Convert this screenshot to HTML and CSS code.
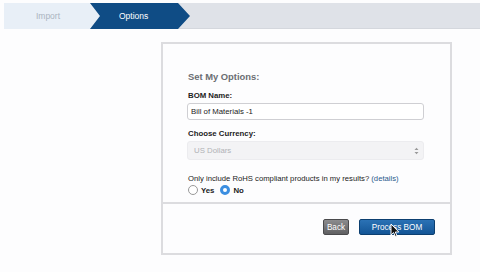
FILE: index.html
```html
<!DOCTYPE html>
<html>
<head>
<meta charset="utf-8">
<link rel="stylesheet" href="styles.css">
</head>
<body>
<div class="steps">
  <div class="step step-done">Import</div>
  <div class="step step-active">Options</div>
</div>
<div class="main">
  <div class="panel">
    <div class="panel-body">
      <h2 class="title">Set My Options:</h2>
      <label class="label">BOM Name:</label>
      <div class="input">Bill of Materials -1</div>
      <label class="label">Choose Currency:</label>
      <div class="select"><span>US Dollars</span>
        <svg class="caret" width="5" height="8" viewBox="0 0 5 8"><path d="M0.5 3 L2.5 0.8 L4.5 3 Z M0.5 5 L2.5 7.2 L4.5 5 Z" fill="#999"/></svg>
      </div>
      <p class="question">Only include RoHS compliant products in my results? <span class="link">(details)</span></p>
      <div class="radios">
        <span class="radio"></span><span class="rlabel">Yes</span>
        <span class="radio radio-on"></span><span class="rlabel">No</span>
      </div>
    </div>
    <div class="actions">
      <button class="btn btn-back">Back</button>
      <button class="btn btn-primary">Process BOM
        <svg class="cursor" width="10" height="15" viewBox="0 0 10 15"><path d="M1 1 L1 12 L3.6 9.6 L5.4 13.6 L7 12.9 L5.3 9 L8.8 9 Z" fill="#111" stroke="#fff" stroke-width="1"/></svg>
      </button>
    </div>
  </div>
</div>
</body>
</html>
```

FILE: styles.css
```css
* { box-sizing: border-box; }
html, body { margin: 0; padding: 0; }
body {
  width: 480px;
  height: 272px;
  background: #fdfdfe;
  font-family: "Liberation Sans", Arial, sans-serif;
  overflow: hidden;
}
.steps {
  margin: 3px 0 0 4px;
  height: 26px;
  background: #dfe2e8;
  border-bottom: 1px solid #d4d7dd;
  display: flex;
}
.step {
  height: 26px;
  display: flex;
  align-items: center;
  font-size: 8.5px;
}
.step-done {
  width: 96px;
  background: #e8eff7;
  color: #aab4c0;
  justify-content: center;
  padding-right: 8px;
  clip-path: polygon(0 0, 86px 0, 96px 50%, 86px 100%, 0 100%);
}
.step-active {
  width: 100px;
  margin-left: -10px;
  background: #0f4c85;
  color: #fff;
  padding-left: 29px;
  clip-path: polygon(0 0, 88px 0, 100px 50%, 88px 100%, 0 100%, 10px 50%);
}
.main {
  padding: 13px 0 0 161px;
}
.panel {
  width: 291px;
  height: 213px;
  border: 2px solid #dcdcdf;
  background: #fdfdfe;
}
.panel-body {
  padding: 27px 24px 0 25px;
  height: 160px;
  border-bottom: 2px solid #dcdcdf;
}
.title {
  margin: 0 0 9px;
  font-size: 9.4px;
  font-weight: bold;
  color: #6b6e73;
}
.label {
  display: block;
  font-size: 7.8px;
  font-weight: bold;
  color: #222;
  margin-bottom: 3px;
}
.input {
  height: 17px;
  width: 237px;
  margin-left: -1px;
  border: 1px solid #cfcfd3;
  border-radius: 3px;
  background: #fff;
  font-size: 7.8px;
  color: #222;
  padding-left: 3px;
  display: flex;
  align-items: center;
  margin-bottom: 9px;
}
.select {
  height: 19px;
  width: 237px;
  margin-left: -1px;
  border-radius: 3px;
  background: #f3f3f5;
  border: 1px solid #ececef;
  font-size: 7.8px;
  color: #b0b2b6;
  padding: 0 4px 0 6px;
  display: flex;
  align-items: center;
  justify-content: space-between;
  margin-bottom: 14px;
}
.question {
  margin: 0 0 2px;
  font-size: 7.7px;
  color: #222;
}
.link { color: #2a5a8c; }
.radios {
  display: flex;
  align-items: center;
  font-size: 7.8px;
  font-weight: bold;
  color: #222;
}
.radio {
  width: 10px;
  height: 10px;
  border-radius: 50%;
  border: 1px solid #999;
  background: #fff;
  margin-right: 3px;
}
.radio-on {
  border: 3px solid #3b8ee0;
  background: #fff;
  margin-left: 4px;
}
.rlabel { margin-right: 2px; }
.actions {
  display: flex;
  justify-content: flex-end;
  gap: 10px;
  padding: 15px 15px 0 0;
}
.btn {
  height: 16px;
  border-radius: 2px;
  font-family: "Liberation Sans", Arial, sans-serif;
  font-size: 8.2px;
  color: #fff;
  padding: 0;
  display: flex;
  align-items: center;
  justify-content: center;
  position: relative;
}
.btn-back {
  width: 26px;
  border: 1px solid #4a4a4c;
  background: linear-gradient(#8c8c8e, #606062);
}
.btn-primary {
  width: 76px;
  border: 1px solid #0c3f70;
  background: linear-gradient(#2b72b5, #135596);
}
.cursor {
  position: absolute;
  left: 30px;
  top: 3px;
}
```
